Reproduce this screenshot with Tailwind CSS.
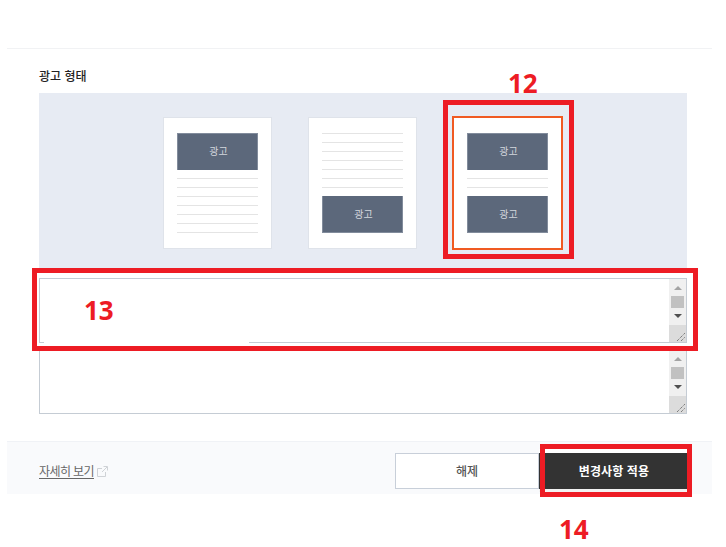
<!DOCTYPE html>
<html lang="ko">
<head>
    <meta charset="UTF-8">
    <title>광고 형태</title>
    <script src="https://cdn.jsdelivr.net/npm/@tailwindcss/browser@4"></script>
</head>
<body class="bg-white font-['Noto_Sans_CJK_KR','Noto_Sans',sans-serif]">
<div class="relative w-[726px] h-[547px] overflow-hidden">
    <div class="ml-[7px] w-[705px] pt-[48px]">
        <section class="border-t border-[#f1f2f4] pl-[32px] pr-[25px] h-[393px]">
            <h2 class="pt-[18px] h-[44px] text-[12px] leading-[18px] font-medium text-[#222]">광고 형태</h2>

            <div class="flex gap-9 pl-[124px] pt-[24px] h-[175px] bg-[#e7ebf3]">
                <!-- top -->
                <div class="flex flex-col gap-2 w-[109px] h-[132px] px-[13px] pt-[15px] bg-white border border-[#dfe3ea]">
                    <div class="flex items-center justify-center h-[37px] pb-[3px] pl-[2px] bg-[#5c687b] border-x border-t border-[#828c9c] text-[10px] text-[#d3d7dd]">광고</div>
                    <div class="h-px bg-[#e4e4e4]"></div>
                    <div class="h-px bg-[#e4e4e4]"></div>
                    <div class="h-px bg-[#e4e4e4]"></div>
                    <div class="h-px bg-[#e4e4e4]"></div>
                    <div class="h-px bg-[#e4e4e4]"></div>
                    <div class="h-px bg-[#e4e4e4]"></div>
                    <div class="h-px bg-[#e4e4e4]"></div>
                </div>
                <!-- bottom -->
                <div class="flex flex-col gap-2 w-[109px] h-[132px] px-[13px] pt-[15px] bg-white border border-[#dfe3ea]">
                    <div class="h-px bg-[#e4e4e4]"></div>
                    <div class="h-px bg-[#e4e4e4]"></div>
                    <div class="h-px bg-[#e4e4e4]"></div>
                    <div class="h-px bg-[#e4e4e4]"></div>
                    <div class="h-px bg-[#e4e4e4]"></div>
                    <div class="h-px bg-[#e4e4e4]"></div>
                    <div class="h-px bg-[#e4e4e4]"></div>
                    <div class="flex items-center justify-center h-[37px] pb-[2px] pl-[2px] bg-[#5c687b] border-x border-b border-[#828c9c] text-[10px] text-[#d3d7dd]">광고</div>
                </div>
                <!-- top + bottom, selected -->
                <div class="flex flex-col gap-2 w-[109px] h-[132px] px-[13px] pt-[15px] bg-white border border-white outline-2 outline-offset-[-1px] outline-[#f05a22]">
                    <div class="flex items-center justify-center h-[37px] pb-[3px] pl-[2px] bg-[#5c687b] border-x border-t border-[#828c9c] text-[10px] text-[#d3d7dd]">광고</div>
                    <div class="h-px bg-[#e4e4e4]"></div>
                    <div class="h-px bg-[#e4e4e4]"></div>
                    <div class="flex items-center justify-center h-[37px] pb-[2px] pl-[2px] bg-[#5c687b] border-x border-b border-[#828c9c] text-[10px] text-[#d3d7dd]">광고</div>
                </div>
            </div>

            <div class="flex flex-col gap-[6px] mt-[10px]">
                <div class="flex justify-end h-[65px] border border-[#c5ccd4] bg-white">
                    <div class="flex flex-col items-center w-[17px] bg-[#f0f0f0]">
                        <div class="mt-[7px] w-0 h-0 border-x-[4px] border-x-transparent border-b-[4px] border-b-[#a3a3a3]"></div>
                        <div class="mt-[6px] w-[13px] h-[12px] bg-[#c1c1c1]"></div>
                        <div class="mt-[6px] w-0 h-0 border-x-[4px] border-x-transparent border-t-[4px] border-t-[#505050]"></div>
                        <div class="mt-auto w-[17px] h-[17px] bg-[#dcdcdc]">
                            <svg width="17" height="17" viewBox="0 0 17 17"><path d="M8 16 16 8M12 16 16 12" stroke="#555" stroke-width="1" stroke-dasharray="1 1" fill="none"/></svg>
                        </div>
                    </div>
                </div>
                <div class="flex justify-end h-[65px] border border-[#c5ccd4] bg-white">
                    <div class="flex flex-col items-center w-[17px] bg-[#f0f0f0]">
                        <div class="mt-[7px] w-0 h-0 border-x-[4px] border-x-transparent border-b-[4px] border-b-[#a3a3a3]"></div>
                        <div class="mt-[6px] w-[13px] h-[12px] bg-[#c1c1c1]"></div>
                        <div class="mt-[6px] w-0 h-0 border-x-[4px] border-x-transparent border-t-[4px] border-t-[#505050]"></div>
                        <div class="mt-auto w-[17px] h-[17px] bg-[#dcdcdc]">
                            <svg width="17" height="17" viewBox="0 0 17 17"><path d="M8 16 16 8M12 16 16 12" stroke="#555" stroke-width="1" stroke-dasharray="1 1" fill="none"/></svg>
                        </div>
                    </div>
                </div>
            </div>
        </section>

        <footer class="flex items-start h-[53px] pl-[32px] pr-[25px] pt-[11px] bg-[#f9fafc] border-t border-[#f0f2f6]">
            <a class="flex items-center gap-[3px] h-[36px] text-[12px] tracking-[-0.6px] text-[#666]">
                <span class="underline underline-offset-2">자세히 보기</span>
                <svg width="11" height="11" viewBox="0 0 11 11" fill="none" stroke="#cfd2d6"><path d="M5 2.5H.5v8h8V6M5 6l5-5M6.5.5h4v4"/></svg>
            </a>
            <button class="ml-auto w-[144px] h-[36px] bg-white border border-[#c8cfd9] text-[12px] font-medium text-[#555]">해제</button>
            <button class="-mt-[4px] w-[148px] h-[43px] pl-[2px] bg-[#333] border-t-[4px] border-b-[3px] border-t-white border-b-[#f2f2f2] text-[12px] tracking-[0.1px] font-bold text-white">변경사항 적용</button>
        </footer>
    </div>

    <!-- annotations drawn over the screenshot -->
    <div class="absolute left-[44px] top-[341px] w-[205px] h-[3px] bg-white"></div>
    <div class="absolute left-[443px] top-[100px] w-[131px] h-[159px] border-[5px] border-[#ed1c24]"></div>
    <div class="absolute left-[32px] top-[268px] w-[666px] h-[83px] border-[5px] border-[#ed1c24]"></div>
    <div class="absolute left-[540px] top-[444px] w-[152px] h-[53px] border-[5px] border-[#ed1c24]"></div>
    <span class="absolute left-[508px] top-[66px] text-[26px] leading-[34px] font-bold text-[#ed1c24] font-['Open_Sans',sans-serif]">12</span>
    <span class="absolute left-[84px] top-[293px] text-[26px] leading-[34px] font-bold text-[#ed1c24] font-['Open_Sans',sans-serif]">13</span>
    <span class="absolute left-[559px] top-[512px] text-[26px] leading-[34px] font-bold text-[#ed1c24] font-['Open_Sans',sans-serif]">14</span>
</div>
</body>
</html>
